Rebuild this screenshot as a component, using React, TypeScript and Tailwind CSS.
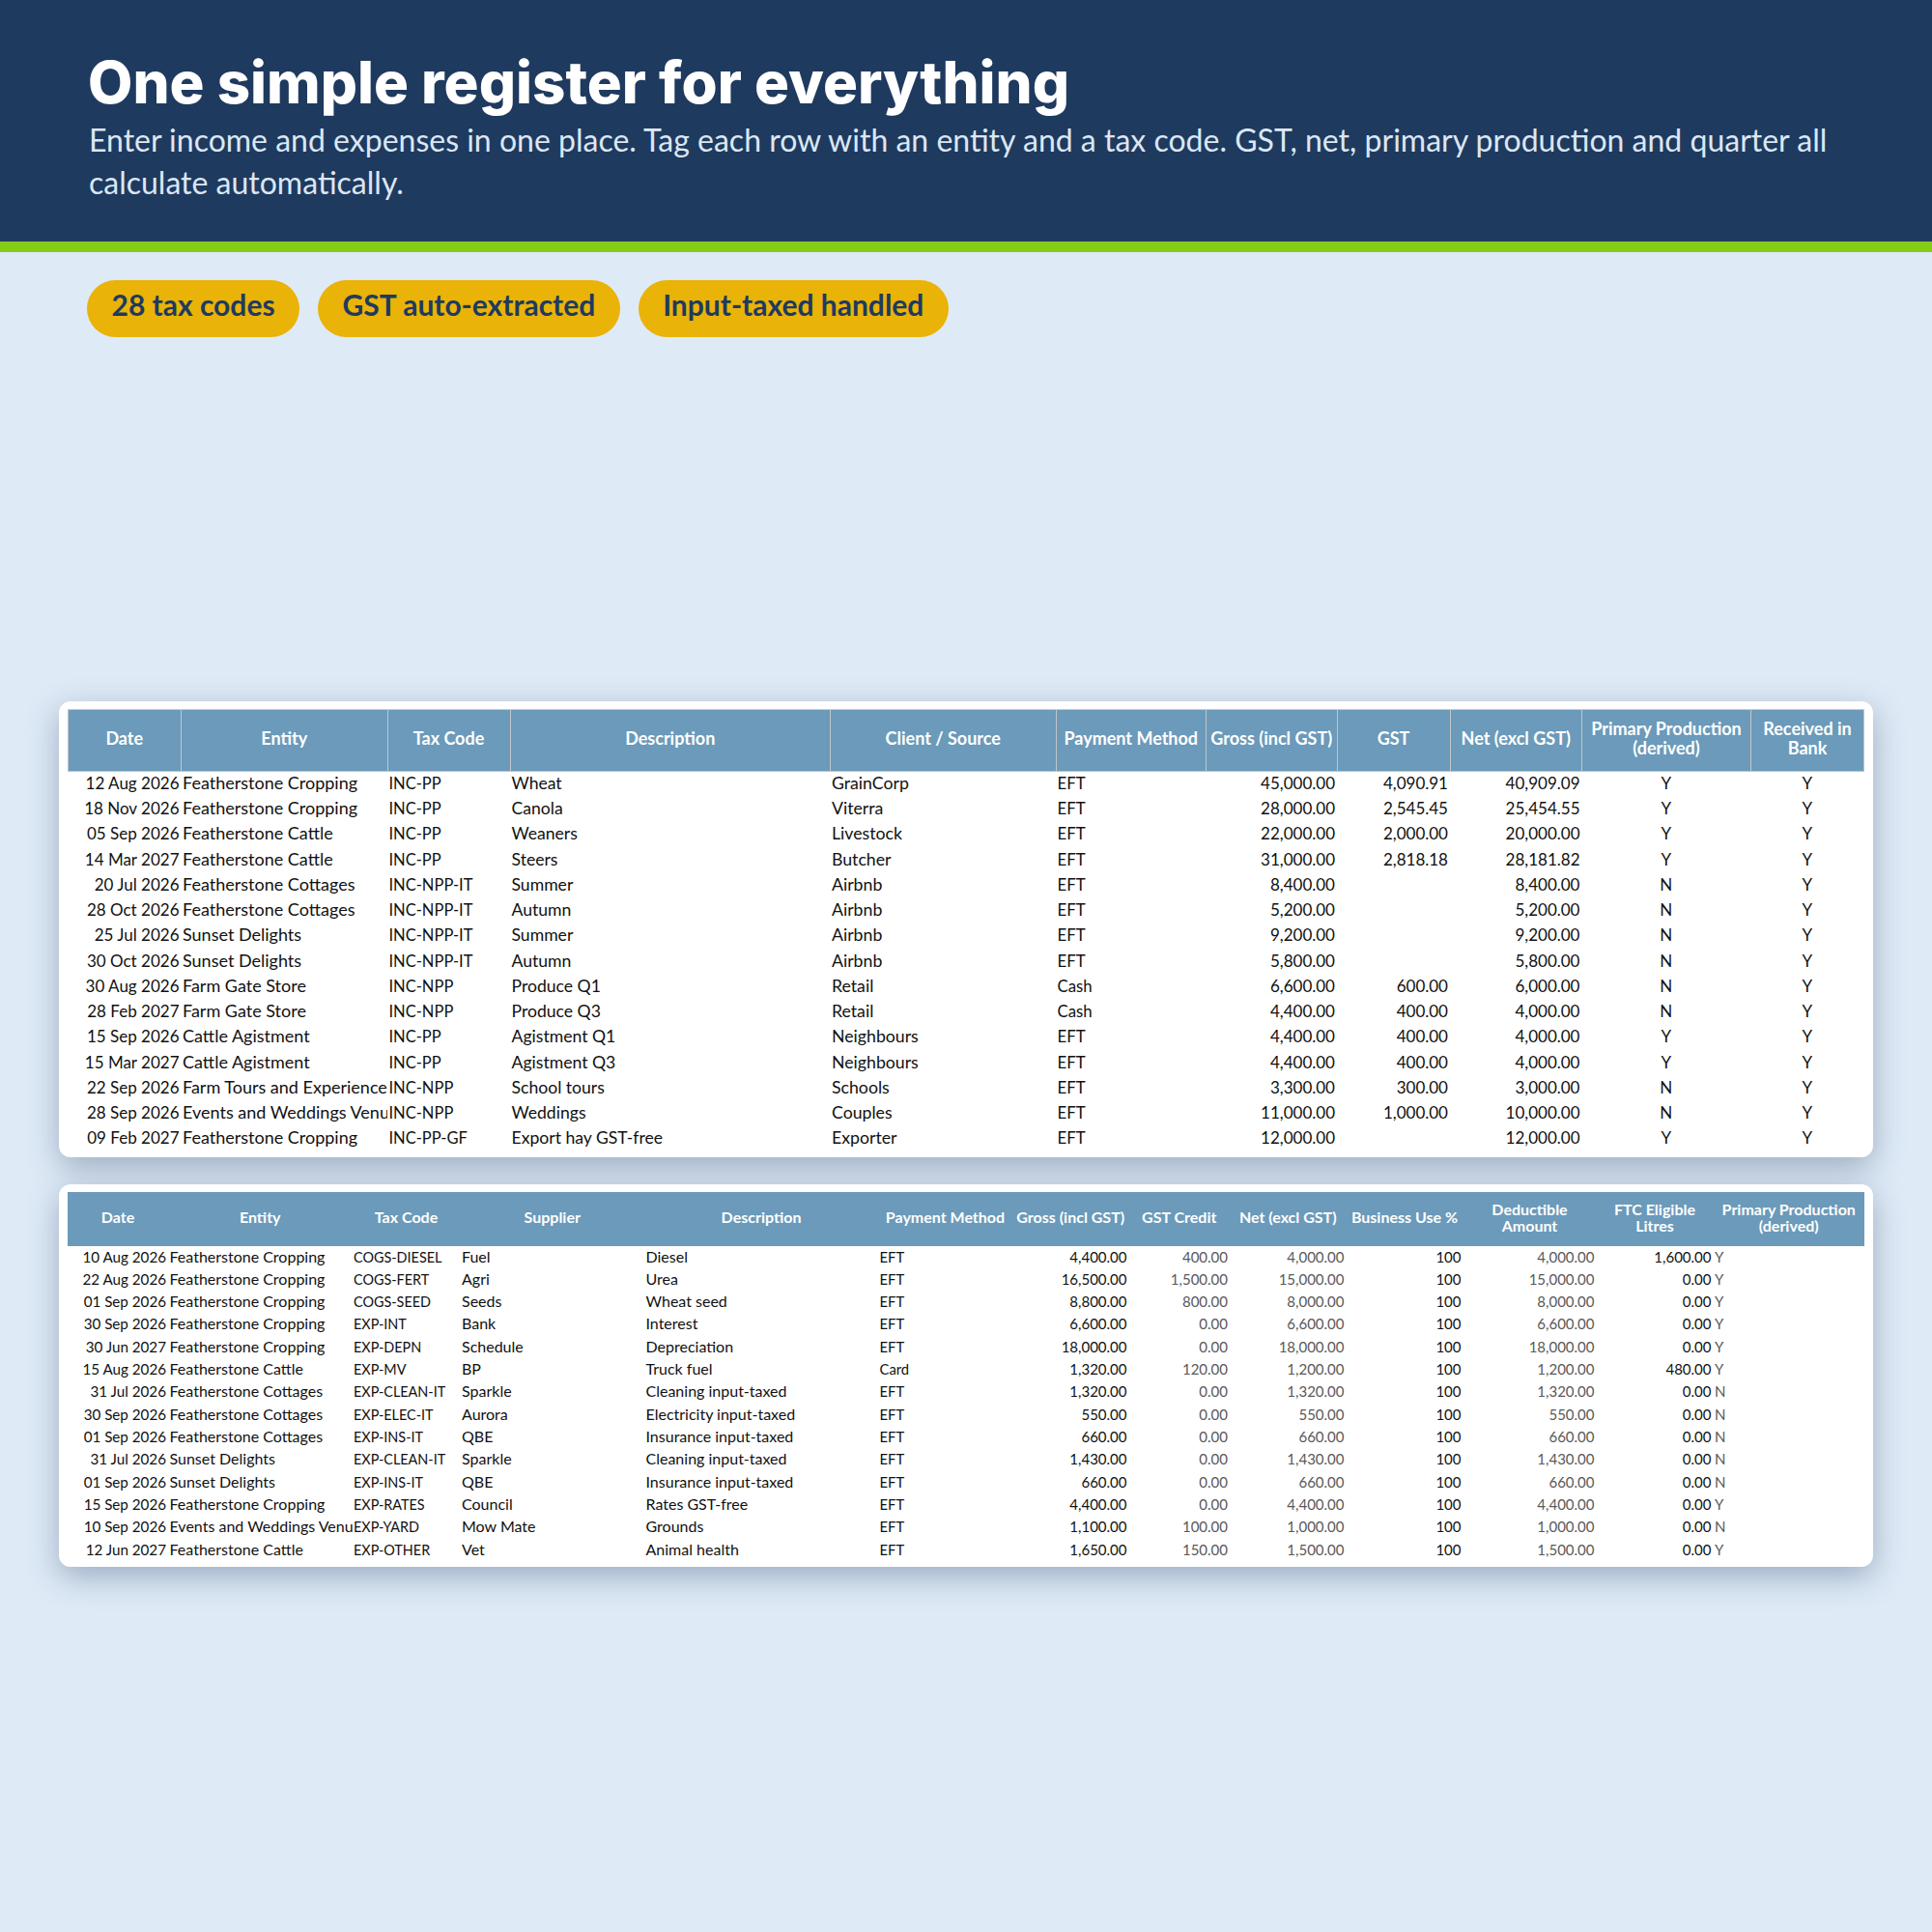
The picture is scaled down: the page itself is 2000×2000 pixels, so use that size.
const LATO = "font-['Lato','Liberation_Sans',sans-serif]";

const incomeCols = [
  "w-[117.5px]", "w-[213.5px]", "w-[127px]", "w-[331.5px]", "w-[233.5px]", "w-[155.5px]",
  "w-[135.5px]", "w-[117px]", "w-[136.5px]", "w-[175px]", "w-[117px]",
];
const incomeHead = [
  "Date", "Entity", "Tax Code", "Description", "Client / Source", "Payment Method",
  "Gross (incl GST)", "GST", "Net (excl GST)", "Primary Production (derived)", "Received in Bank",
];
const income = [
  ["12 Aug 2026", "Featherstone Cropping", "INC-PP", "Wheat", "GrainCorp", "EFT", "45,000.00", "4,090.91", "40,909.09", "Y", "Y"],
  ["18 Nov 2026", "Featherstone Cropping", "INC-PP", "Canola", "Viterra", "EFT", "28,000.00", "2,545.45", "25,454.55", "Y", "Y"],
  ["05 Sep 2026", "Featherstone Cattle", "INC-PP", "Weaners", "Livestock", "EFT", "22,000.00", "2,000.00", "20,000.00", "Y", "Y"],
  ["14 Mar 2027", "Featherstone Cattle", "INC-PP", "Steers", "Butcher", "EFT", "31,000.00", "2,818.18", "28,181.82", "Y", "Y"],
  ["20 Jul 2026", "Featherstone Cottages", "INC-NPP-IT", "Summer", "Airbnb", "EFT", "8,400.00", "", "8,400.00", "N", "Y"],
  ["28 Oct 2026", "Featherstone Cottages", "INC-NPP-IT", "Autumn", "Airbnb", "EFT", "5,200.00", "", "5,200.00", "N", "Y"],
  ["25 Jul 2026", "Sunset Delights", "INC-NPP-IT", "Summer", "Airbnb", "EFT", "9,200.00", "", "9,200.00", "N", "Y"],
  ["30 Oct 2026", "Sunset Delights", "INC-NPP-IT", "Autumn", "Airbnb", "EFT", "5,800.00", "", "5,800.00", "N", "Y"],
  ["30 Aug 2026", "Farm Gate Store", "INC-NPP", "Produce Q1", "Retail", "Cash", "6,600.00", "600.00", "6,000.00", "N", "Y"],
  ["28 Feb 2027", "Farm Gate Store", "INC-NPP", "Produce Q3", "Retail", "Cash", "4,400.00", "400.00", "4,000.00", "N", "Y"],
  ["15 Sep 2026", "Cattle Agistment", "INC-PP", "Agistment Q1", "Neighbours", "EFT", "4,400.00", "400.00", "4,000.00", "Y", "Y"],
  ["15 Mar 2027", "Cattle Agistment", "INC-PP", "Agistment Q3", "Neighbours", "EFT", "4,400.00", "400.00", "4,000.00", "Y", "Y"],
  ["22 Sep 2026", "Farm Tours and Experiences", "INC-NPP", "School tours", "Schools", "EFT", "3,300.00", "300.00", "3,000.00", "N", "Y"],
  ["28 Sep 2026", "Events and Weddings Venue", "INC-NPP", "Weddings", "Couples", "EFT", "11,000.00", "1,000.00", "10,000.00", "N", "Y"],
  ["09 Feb 2027", "Featherstone Cropping", "INC-PP-GF", "Export hay GST-free", "Exporter", "EFT", "12,000.00", "", "12,000.00", "Y", "Y"],
];
const incomeAlign = [
  "text-right text-[17px]", "text-[18px]", "text-[16.5px]", "text-[17.6px]", "text-[17.7px]", "text-[16.8px]",
  "text-right text-[17px]", "text-right text-[17px]", "text-right text-[17px]", "text-center text-[17px]", "text-center text-[17px]",
];

const expenseCols = [
  "w-[104px]", "w-[190.5px]", "w-[112px]", "w-[190.5px]", "w-[242px]", "w-[139px]", "w-[120.5px]",
  "w-[104.5px]", "w-[120.5px]", "w-[121px]", "w-[138px]", "w-[121px]", "w-[156.5px]",
];
const expenseHead = [
  "Date", "Entity", "Tax Code", "Supplier", "Description", "Payment Method", "Gross (incl GST)",
  "GST Credit", "Net (excl GST)", "Business Use %", "Deductible Amount", "FTC Eligible Litres", "Primary Production (derived)",
];
const expenses = [
  ["10 Aug 2026", "Featherstone Cropping", "COGS-DIESEL", "Fuel", "Diesel", "EFT", "4,400.00", "400.00", "4,000.00", "100", "4,000.00", "1,600.00", "Y"],
  ["22 Aug 2026", "Featherstone Cropping", "COGS-FERT", "Agri", "Urea", "EFT", "16,500.00", "1,500.00", "15,000.00", "100", "15,000.00", "0.00", "Y"],
  ["01 Sep 2026", "Featherstone Cropping", "COGS-SEED", "Seeds", "Wheat seed", "EFT", "8,800.00", "800.00", "8,000.00", "100", "8,000.00", "0.00", "Y"],
  ["30 Sep 2026", "Featherstone Cropping", "EXP-INT", "Bank", "Interest", "EFT", "6,600.00", "0.00", "6,600.00", "100", "6,600.00", "0.00", "Y"],
  ["30 Jun 2027", "Featherstone Cropping", "EXP-DEPN", "Schedule", "Depreciation", "EFT", "18,000.00", "0.00", "18,000.00", "100", "18,000.00", "0.00", "Y"],
  ["15 Aug 2026", "Featherstone Cattle", "EXP-MV", "BP", "Truck fuel", "Card", "1,320.00", "120.00", "1,200.00", "100", "1,200.00", "480.00", "Y"],
  ["31 Jul 2026", "Featherstone Cottages", "EXP-CLEAN-IT", "Sparkle", "Cleaning input-taxed", "EFT", "1,320.00", "0.00", "1,320.00", "100", "1,320.00", "0.00", "N"],
  ["30 Sep 2026", "Featherstone Cottages", "EXP-ELEC-IT", "Aurora", "Electricity input-taxed", "EFT", "550.00", "0.00", "550.00", "100", "550.00", "0.00", "N"],
  ["01 Sep 2026", "Featherstone Cottages", "EXP-INS-IT", "QBE", "Insurance input-taxed", "EFT", "660.00", "0.00", "660.00", "100", "660.00", "0.00", "N"],
  ["31 Jul 2026", "Sunset Delights", "EXP-CLEAN-IT", "Sparkle", "Cleaning input-taxed", "EFT", "1,430.00", "0.00", "1,430.00", "100", "1,430.00", "0.00", "N"],
  ["01 Sep 2026", "Sunset Delights", "EXP-INS-IT", "QBE", "Insurance input-taxed", "EFT", "660.00", "0.00", "660.00", "100", "660.00", "0.00", "N"],
  ["15 Sep 2026", "Featherstone Cropping", "EXP-RATES", "Council", "Rates GST-free", "EFT", "4,400.00", "0.00", "4,400.00", "100", "4,400.00", "0.00", "Y"],
  ["10 Sep 2026", "Events and Weddings Venue", "EXP-YARD", "Mow Mate", "Grounds", "EFT", "1,100.00", "100.00", "1,000.00", "100", "1,000.00", "0.00", "N"],
  ["12 Jun 2027", "Featherstone Cattle", "EXP-OTHER", "Vet", "Animal health", "EFT", "1,650.00", "150.00", "1,500.00", "100", "1,500.00", "0.00", "Y"],
];
const expenseAlign = [
  "text-right text-[15.2px]", "text-[16px]", "text-[14.4px]", "text-[16px]", "text-[16px]", "text-[14.8px]",
  "text-right text-[15px]", "text-right text-[15px] text-[#595959]", "text-right text-[15px] text-[#595959]", "text-right text-[15px]",
  "text-right text-[15px] text-[#595959]", "text-right text-[15px]", "text-[15px] text-[#595959]",
];

const App = () => {
  return (
    <div className={`${LATO} min-h-[2000px] bg-[#deeaf6] pb-[378px]`}>
      <header className="h-[261px] border-b-[11px] border-[#84cc16] bg-[#1f3a5f] px-[91px] pt-[52px]">
        <h1 className="font-['Inter',sans-serif] text-[60px] font-extrabold leading-[66px] text-white">
          One simple register for everything
        </h1>
        <p className="ml-px mt-[5px] text-[32px] leading-[44px] text-[#dbe7f3]">
          Enter income and expenses in one place. Tag each row with an entity and a tax code. GST, net, primary production and quarter all calculate automatically.
        </p>
      </header>

      <div className="mt-[29px] flex gap-[19px] pl-[90px]">
        {["28 tax codes", "GST auto-extracted", "Input-taxed handled"].map((t) => (
          <span
            key={t}
            className="flex h-[59px] items-center rounded-full bg-[#e9b308] px-[25.5px] pb-[9px] text-[30px] font-bold text-[#1f3a5f]"
          >
            {t}
          </span>
        ))}
      </div>

      <div className="mx-[61px] mt-[377px] rounded-[12px] bg-white pb-[5px] pl-[8.5px] pr-[9px] pt-[8px] shadow-[0_10px_32px_rgba(31,58,95,0.35)]">
        <table className="w-[1859.5px] table-fixed border-collapse text-[#111]">
          <colgroup>
            {incomeCols.map((c, i) => (
              <col key={i} className={c} />
            ))}
          </colgroup>
          <thead>
            <tr className="h-[64px] bg-[#6b9aba]">
              {incomeHead.map((h) => (
                <th
                  key={h}
                  className="border border-[#c2c7cb] px-[3px] pb-[5px] text-center text-[18px] font-bold leading-[20px] text-white"
                >
                  {h}
                </th>
              ))}
            </tr>
          </thead>
          <tbody>
            {income.map((row, r) => (
              <tr key={r} className="h-[26.25px]">
                {row.map((v, i) => (
                  <td
                    key={i}
                    className={`overflow-hidden whitespace-nowrap pb-[2px] pl-[1.5px] pr-[2px] pt-0 align-baseline leading-[23px] ${incomeAlign[i]}`}
                  >
                    {v}
                  </td>
                ))}
              </tr>
            ))}
          </tbody>
        </table>
      </div>

      <div className="mx-[61px] mt-[28px] rounded-[12px] bg-white pb-[6px] pl-[9px] pr-[9px] pt-[8px] shadow-[0_10px_32px_rgba(31,58,95,0.35)]">
        <table className="w-[1860px] table-fixed border-collapse text-[#111]">
          <colgroup>
            {expenseCols.map((c, i) => (
              <col key={i} className={c} />
            ))}
          </colgroup>
          <thead>
            <tr className="h-[56px] bg-[#6b9aba]">
              {expenseHead.map((h) => (
                <th key={h} className="px-[2px] pb-[3.5px] text-center text-[16px] font-bold leading-[17px] text-white">
                  {h}
                </th>
              ))}
            </tr>
          </thead>
          <tbody>
            {expenses.map((row, r) => (
              <tr key={r} className="h-[23.33px]">
                {row.map((v, i) => (
                  <td
                    key={i}
                    className={`overflow-hidden whitespace-nowrap pb-[1px] pl-[1.5px] pr-[2px] pt-0 align-baseline leading-[21px] ${expenseAlign[i]}`}
                  >
                    {v}
                  </td>
                ))}
              </tr>
            ))}
          </tbody>
        </table>
      </div>
    </div>
  );
};

export default App;
